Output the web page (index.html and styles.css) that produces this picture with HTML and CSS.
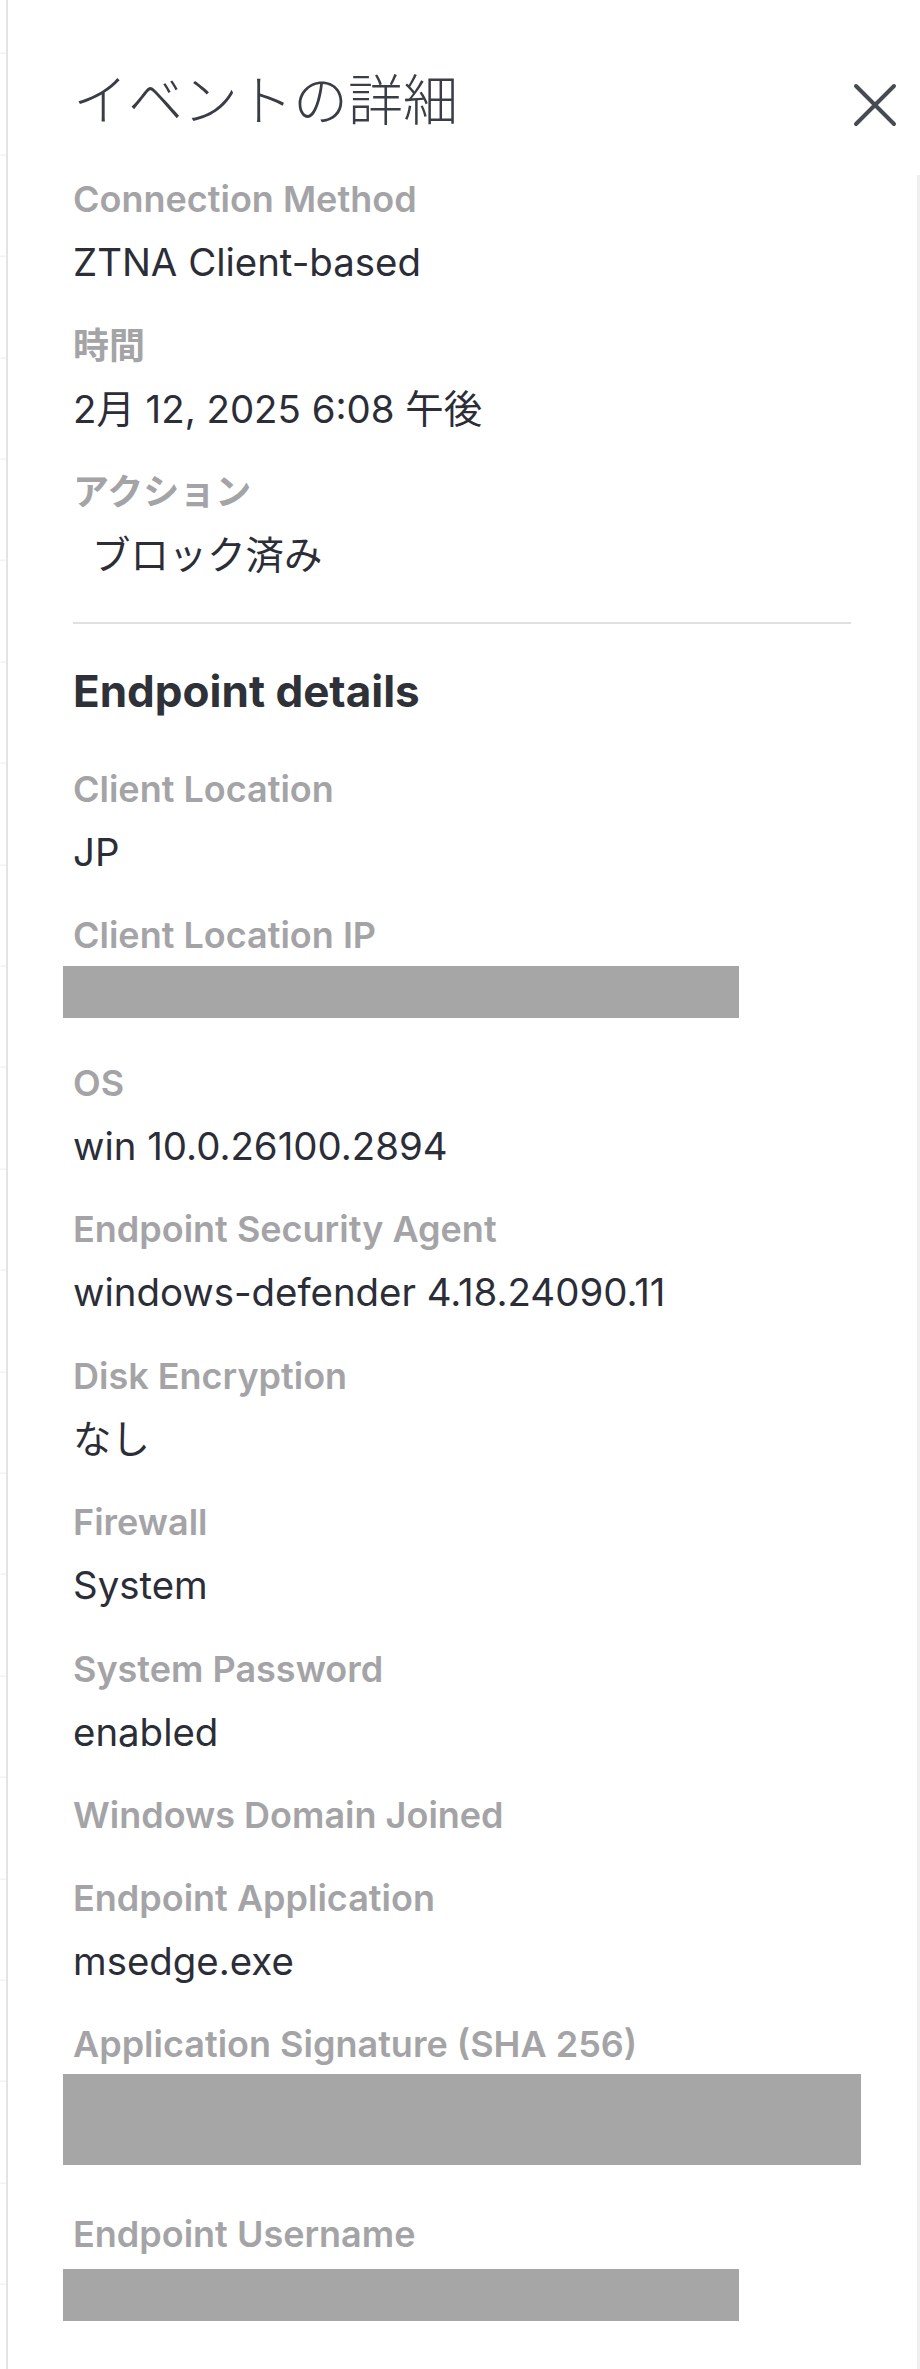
FILE: index.html
```html
<!DOCTYPE html>
<html lang="ja">
<head>
<meta charset="utf-8">
<title>イベントの詳細</title>
<link rel="stylesheet" href="styles.css">
</head>
<body>
<div class="backdrop"></div>
<aside class="panel">
  <header class="header">
    <h1 class="title">イベントの詳細</h1>
    <button class="close" aria-label="閉じる">
      <svg viewBox="0 0 46 46" width="46" height="46"><path d="M4 4 L42 42 M42 4 L4 42" stroke="#464a52" stroke-width="4" stroke-linecap="round" fill="none"/></svg>
    </button>
  </header>
  <div class="body">
    <div class="field"><div class="label">Connection Method</div><div class="value">ZTNA Client-based</div></div>
    <div class="field"><div class="label">時間</div><div class="value">2月 12, 2025 6:08 午後</div></div>
    <div class="field"><div class="label">アクション</div><div class="value tag">ブロック済み</div></div>
    <hr class="divider">
    <h2 class="section">Endpoint details</h2>
    <div class="field"><div class="label">Client Location</div><div class="value">JP</div></div>
    <div class="field"><div class="label">Client Location IP</div><div class="redact redact-ip"></div></div>
    <div class="field"><div class="label">OS</div><div class="value">win 10.0.26100.2894</div></div>
    <div class="field"><div class="label">Endpoint Security Agent</div><div class="value">windows-defender 4.18.24090.11</div></div>
    <div class="field"><div class="label">Disk Encryption</div><div class="value">なし</div></div>
    <div class="field"><div class="label">Firewall</div><div class="value">System</div></div>
    <div class="field"><div class="label">System Password</div><div class="value">enabled</div></div>
    <div class="field"><div class="label">Windows Domain Joined</div></div>
    <div class="field"><div class="label">Endpoint Application</div><div class="value">msedge.exe</div></div>
    <div class="field"><div class="label">Application Signature (SHA 256)</div><div class="redact redact-sig"></div></div>
    <div class="field last"><div class="label">Endpoint Username</div><div class="redact redact-user"></div></div>
  </div>
</aside>
</body>
</html>
```

FILE: styles.css
```css
* { box-sizing: border-box; }
html, body { margin: 0; padding: 0; background: #ffffff; }
body {
  display: flex;
  width: 920px;
  min-height: 2369px;
  font-family: "Inter", "Noto Sans CJK JP", sans-serif;
  color: #2b2d37;
}
.backdrop {
  width: 6px;
  flex: none;
  background: repeating-linear-gradient(180deg, transparent 0, transparent 100.4px, #ececec 100.4px, #ececec 101.4px);
  background-position: 0 -47.4px;
}
.panel {
  flex: 1;
  border-left: 2px solid #e4e4e4;
  display: flex;
  flex-direction: column;
}
.header {
  display: flex;
  justify-content: space-between;
  align-items: flex-start;
  padding: 68px 22px 0 65px;
}
.title {
  margin: 0;
  font-family: "Noto Sans CJK JP", sans-serif;
  font-weight: 300;
  font-size: 55px;
  line-height: 56px;
  color: #3a3d45;
  letter-spacing: 0;
}
.close {
  border: 0;
  background: none;
  padding: 0;
  margin-top: 14px;
  width: 46px;
  height: 46px;
  cursor: pointer;
}
.close svg { display: block; }
.body {
  margin-top: 47px;
  padding: 0 0 39px 65px;
  border-right: 3px solid #efefef;
  flex: 1;
}
.field {
  display: flex;
  flex-direction: column;
  gap: 14px;
  margin-bottom: 34.5px;
  width: 778px;
}
.field.last { margin-bottom: 0; }
.label {
  font-size: 36px;
  font-weight: 600;
  line-height: 48px;
  color: #a4a4a7;
}
.value {
  font-size: 38.4px;
  font-weight: 400;
  line-height: 50px;
  color: #2b2d37;
}
.value.tag { padding-left: 19px; }
.divider {
  border: 0;
  height: 2px;
  background: #e0e0e0;
  margin: 42px 0 41px;
  width: 778px;
}
.section {
  margin: 0 0 47.5px;
  font-size: 44px;
  font-weight: 700;
  line-height: 52px;
  color: #2e3137;
}
.redact {
  background: #a6a6a6;
  margin-left: -10px;
}
.redact-ip { width: 676px; height: 52px; margin-top: -7px; margin-bottom: 6px; }
.redact-sig { width: 798px; height: 91px; margin-top: -8px; margin-bottom: 10px; }
.redact-user { width: 676px; height: 52px; margin-top: -3px; }
```
